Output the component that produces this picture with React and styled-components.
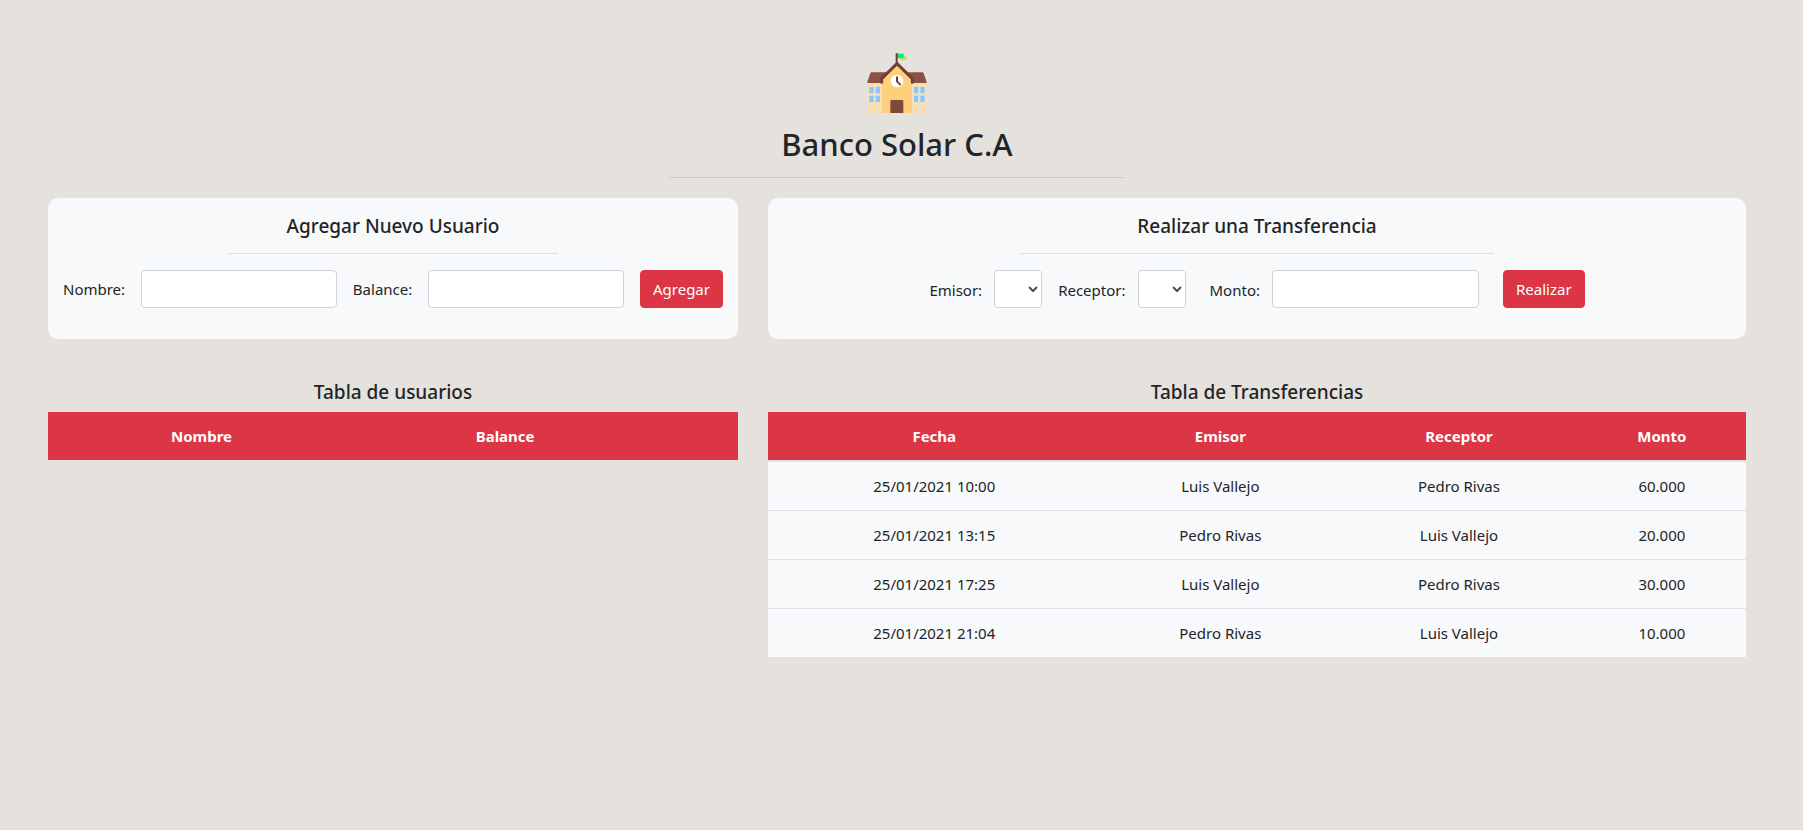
import React from "react";
import styled, { createGlobalStyle } from "styled-components";

const GlobalStyle = createGlobalStyle`
  *, *::before, *::after { box-sizing: border-box; }
  body {
    margin: 0;
    background: #e5e1dc;
    color: #212529;
    font-family: "Segoe UI", "Noto Sans", "Open Sans", sans-serif;
    font-size: 15px;
    line-height: 24px;
  }
  button, input, select { font: inherit; color: inherit; margin: 0; }
`;

const Page = styled.main`
  padding: 53px 42px 48px 33px;
`;

const Header = styled.header`
  display: flex;
  flex-direction: column;
  align-items: center;
  margin-bottom: 20px;
`;

const Logo = styled.svg`
  display: block;
  width: 60px;
  height: 60px;
`;

const Title = styled.h1`
  margin: 11px 0 0;
  font-size: 31px;
  font-weight: 500;
  line-height: 40px;
`;

const Rule = styled.hr`
  width: ${(p) => p.$width};
  margin: ${(p) => p.$gap} auto 16px;
  border: 0;
  border-top: 1px solid rgba(0, 0, 0, 0.1);
`;

const HeaderRule = styled(Rule)`
  margin-bottom: 0;
`;

const Row = styled.div`
  display: flex;
  & + & { margin-top: 41px; }
`;

const Column = styled.section`
  flex: 0 0 calc(100% * ${(p) => p.$span} / 12);
  min-width: 0;
  padding: 0 15px;
`;

const Card = styled.div`
  padding: 16px 15px 31px;
  border-radius: 10px;
  background: #f8f9fb;
`;

const Heading = styled.h2`
  margin: 0;
  font-size: 19px;
  font-weight: 500;
  line-height: 24px;
  text-align: center;
`;

const UserForm = styled.form`
  display: flex;
  align-items: center;
  gap: 16px;
`;

const TransferForm = styled.form`
  display: flex;
  align-items: center;
  justify-content: center;
  gap: 24px;
  label { padding-top: 2px; }
`;

const Field = styled.div`
  display: flex;
  align-items: center;
  gap: 12px;
`;

const SelectGroup = styled.div`
  display: flex;
  gap: 16px;
`;

const Label = styled.label`
  white-space: nowrap;
`;

const Input = styled.input`
  flex: ${(p) => (p.$width ? "none" : "1 1 0")};
  width: ${(p) => p.$width || "auto"};
  min-width: 0;
  height: 38px;
  padding: 6px 12px;
  border: 1px solid #ced4da;
  border-radius: 4px;
  background: #fff;
`;

const Select = styled.select`
  width: 48px;
  height: 38px;
  padding: 6px 0;
  border: 1px solid #ced4da;
  border-radius: 4px;
  background: #fff;
  && { color: #495057; }
`;

const Button = styled.button`
  height: 38px;
  padding: 6px 12px;
  border: 1px solid #dc3545;
  border-radius: 4px;
  background: #dc3545;
  && { color: #fff; }
  cursor: pointer;
`;

const Table = styled.table`
  width: 100%;
  margin-top: 8px;
  table-layout: fixed;
  border-spacing: 0;
  text-align: center;
`;

const HeadCell = styled.th`
  width: ${(p) => p.$width};
  height: 48px;
  padding: 12px;
  background: #dc3545;
  color: #fff;
  font-weight: 700;
`;

const Cell = styled.td`
  padding: 12px;
  border-top: 1px solid #dee2e6;
  background: #f8f9fb;
  tr:first-child > & { border-top-width: 2px; }
`;

const transfers = [
  ["25/01/2021 10:00", "Luis Vallejo", "Pedro Rivas", "60.000"],
  ["25/01/2021 13:15", "Pedro Rivas", "Luis Vallejo", "20.000"],
  ["25/01/2021 17:25", "Luis Vallejo", "Pedro Rivas", "30.000"],
  ["25/01/2021 21:04", "Pedro Rivas", "Luis Vallejo", "10.000"],
];

function BankLogo() {
  return (
    <Logo viewBox="0 0 180 180" aria-hidden="true">
      <path fill="#f7e0b8" d="M2 88H178V180H2Z" />
      <path fill="#8a5244" d="M14 58H166Q169 58 170 61L179 87Q180 90 177 90H3Q0 90 1 87L10 61Q11 58 14 58Z" />
      <path fill="#ffcf7d" d="M45 82L90 36L135 82V180H45Z" />
      <path fill="none" stroke="#733f33" strokeWidth="9" strokeLinecap="round" strokeLinejoin="round" d="M44 88V77L90 32L136 77V88" />
      <path fill="#b7e546" d="M99 8H116Q119 8 118 11L117 14L118 18Q119 21 116 21H104Q99 21 99 16Z" />
      <path fill="#00ea90" d="M91 2H107Q110 2 110 5V12Q110 15 107 15H91Z" />
      <path fill="#733f33" d="M86 2Q86 0 89 0Q92 0 92 2V34H86Z" />
      <circle cx="90" cy="84" r="19" fill="#fff" />
      <path fill="none" stroke="#733f33" strokeWidth="6" strokeLinecap="round" strokeLinejoin="round" d="M90 73V85L99 94" />
      <path fill="#7e4a3b" d="M70 145Q70 141 74 141H105Q109 141 109 145V180H70Z" />
      <path fill="#83c9ff" d="M7 102H20V121H7ZM26 102H39V121H26ZM7 128H20V147H7ZM26 128H39V147H26ZM141 102H154V121H141ZM160 102H173V121H160ZM141 128H154V147H141ZM160 128H173V147H160Z" />
    </Logo>
  );
}

export default function App() {
  const stay = (event) => event.preventDefault();
  return (
    <>
      <GlobalStyle />
      <Page>
        <Header>
          <BankLogo />
          <Title>Banco Solar C.A</Title>
          <HeaderRule $width="456px" $gap="13px" />
        </Header>

        <Row>
          <Column $span={5}>
            <Card>
              <Heading>Agregar Nuevo Usuario</Heading>
              <Rule $width="50%" $gap="15px" />
              <UserForm onSubmit={stay}>
                <Label htmlFor="nombre">Nombre:</Label>
                <Input id="nombre" type="text" />
                <Label htmlFor="balance">Balance:</Label>
                <Input id="balance" type="text" />
                <Button type="submit">Agregar</Button>
              </UserForm>
            </Card>
          </Column>
          <Column $span={7}>
            <Card>
              <Heading>Realizar una Transferencia</Heading>
              <Rule $width="50%" $gap="15px" />
              <TransferForm onSubmit={stay}>
                <SelectGroup>
                  <Field>
                    <Label htmlFor="emisor">Emisor:</Label>
                    <Select id="emisor" />
                  </Field>
                  <Field>
                    <Label htmlFor="receptor">Receptor:</Label>
                    <Select id="receptor" />
                  </Field>
                </SelectGroup>
                <Field>
                  <Label htmlFor="monto">Monto:</Label>
                  <Input id="monto" type="text" $width="207px" />
                </Field>
                <Button type="submit">Realizar</Button>
              </TransferForm>
            </Card>
          </Column>
        </Row>

        <Row>
          <Column $span={5}>
            <Heading id="usuarios">Tabla de usuarios</Heading>
            <Table aria-labelledby="usuarios">
              <thead>
                <tr>
                  <HeadCell scope="col" $width="44.5%">Nombre</HeadCell>
                  <HeadCell scope="col" $width="43.5%">Balance</HeadCell>
                  <HeadCell as="td" $width="12%" />
                </tr>
              </thead>
              <tbody />
            </Table>
          </Column>
          <Column $span={7}>
            <Heading id="transferencias">Tabla de Transferencias</Heading>
            <Table aria-labelledby="transferencias">
              <thead>
                <tr>
                  <HeadCell scope="col" $width="34%">Fecha</HeadCell>
                  <HeadCell scope="col" $width="24.5%">Emisor</HeadCell>
                  <HeadCell scope="col" $width="24.3%">Receptor</HeadCell>
                  <HeadCell scope="col" $width="17.2%">Monto</HeadCell>
                </tr>
              </thead>
              <tbody>
                {transfers.map((row) => (
                  <tr key={row[0]}>
                    {row.map((value, i) => (
                      <Cell key={i}>{value}</Cell>
                    ))}
                  </tr>
                ))}
              </tbody>
            </Table>
          </Column>
        </Row>
      </Page>
    </>
  );
}
